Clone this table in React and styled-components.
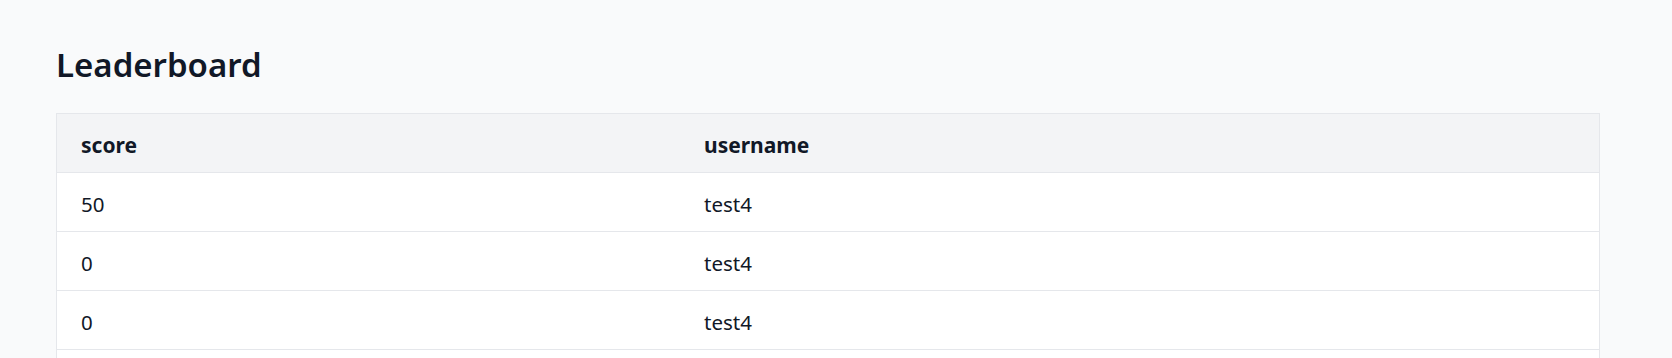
import styled, { createGlobalStyle } from "styled-components";

const GlobalStyle = createGlobalStyle`
  html, body {
    margin: 0;
    padding: 0;
    background: #f9fafb;
  }
  body {
    font-family: "Noto Sans", "Open Sans", sans-serif;
    color: #111827;
  }
`;

const rows = [
  { id: 1, score: 50, username: "test4" },
  { id: 2, score: 0, username: "test4" },
  { id: 3, score: 0, username: "test4" },
  { id: 4, score: 0, username: "test4" },
];

const Page = styled.div`
  padding: 41px 72px 40px 56px;
`;

const Title = styled.h1`
  margin: 0 0 24px;
  font-size: 33px;
  line-height: 48px;
  font-weight: 600;
  color: #111827;
`;

const Table = styled.table`
  width: 1544px;
  border-collapse: collapse;
  background: #fff;
  border: 1px solid #e5e7eb;
`;

const HeadRow = styled.tr`
  background: #f3f4f6;
  border-bottom: 1px solid #e5e7eb;
`;

const Th = styled.th`
  text-align: left;
  font-weight: 700;
  font-size: 21px;
  line-height: 28px;
  padding: 17px 24px 13px;
  width: ${(p) => p.$w || "auto"};
`;

const Row = styled.tr`
  border-bottom: 1px solid #e5e7eb;
`;

const Td = styled.td`
  font-size: 20.5px;
  line-height: 28px;
  padding: 17px 24px 13px;
`;

export default function App() {
  return (
    <>
      <GlobalStyle />
      <Page>
        <Title>Leaderboard</Title>
        <Table>
          <thead>
            <HeadRow>
              <Th $w="575px">score</Th>
              <Th>username</Th>
            </HeadRow>
          </thead>
          <tbody>
            {rows.map((r) => (
              <Row key={r.id}>
                <Td>{r.score}</Td>
                <Td>{r.username}</Td>
              </Row>
            ))}
          </tbody>
        </Table>
      </Page>
    </>
  );
}
